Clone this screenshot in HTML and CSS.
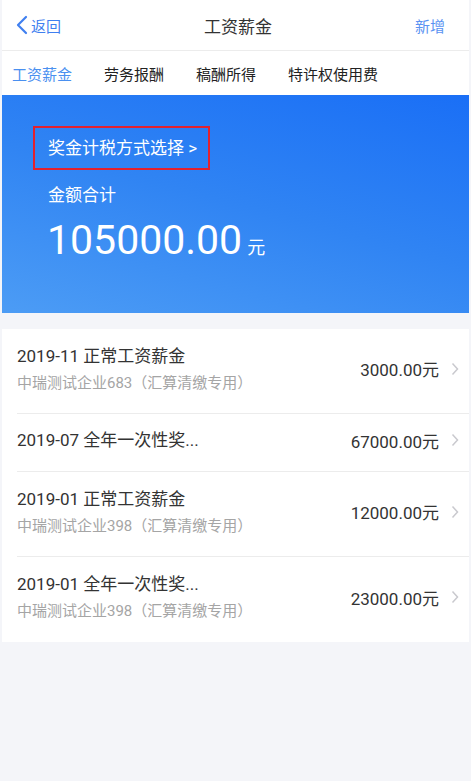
FILE: index.html
```html
<!DOCTYPE html>
<html>
<head>
    <meta charset="utf-8">
    <title>工资薪金</title>
    <link rel="stylesheet" href="styles.css">
</head>
<body>
    <div class="page">
        <header class="topbar">
            <a class="back" href="#">
                <svg width="14" height="20" viewBox="0 0 14 20"><polyline points="11,2 3,10 11,18" fill="none" stroke="#3f7ff0" stroke-width="2.2" stroke-linecap="round" stroke-linejoin="round"/></svg>
                <span>返回</span>
            </a>
            <h1 class="title">工资薪金</h1>
            <a class="add" href="#">新增</a>
        </header>

        <nav class="tabs">
            <a class="tab active" href="#">工资薪金</a>
            <a class="tab" href="#">劳务报酬</a>
            <a class="tab" href="#">稿酬所得</a>
            <a class="tab" href="#">特许权使用费</a>
        </nav>

        <section class="banner">
            <a class="choose" href="#">奖金计税方式选择 &gt;</a>
            <div class="sum-label">金额合计</div>
            <div class="sum"><span class="sum-num">105000.00</span><span class="sum-unit">元</span></div>
        </section>

        <ul class="list">
            <li class="row">
                <div class="info">
                    <div class="name">2019-11 正常工资薪金</div>
                    <div class="corp">中瑞测试企业683（汇算清缴专用）</div>
                </div>
                <div class="money">3000.00元</div>
                <svg class="arrow" width="8" height="14" viewBox="0 0 8 14"><polyline points="1.5,1.5 6.5,7 1.5,12.5" fill="none" stroke="#c9c9ce" stroke-width="1.5"/></svg>
            </li>
            <li class="row single">
                <div class="info">
                    <div class="name">2019-07 全年一次性奖...</div>
                </div>
                <div class="money">67000.00元</div>
                <svg class="arrow" width="8" height="14" viewBox="0 0 8 14"><polyline points="1.5,1.5 6.5,7 1.5,12.5" fill="none" stroke="#c9c9ce" stroke-width="1.5"/></svg>
            </li>
            <li class="row">
                <div class="info">
                    <div class="name">2019-01 正常工资薪金</div>
                    <div class="corp">中瑞测试企业398（汇算清缴专用）</div>
                </div>
                <div class="money">12000.00元</div>
                <svg class="arrow" width="8" height="14" viewBox="0 0 8 14"><polyline points="1.5,1.5 6.5,7 1.5,12.5" fill="none" stroke="#c9c9ce" stroke-width="1.5"/></svg>
            </li>
            <li class="row">
                <div class="info">
                    <div class="name">2019-01 全年一次性奖...</div>
                    <div class="corp">中瑞测试企业398（汇算清缴专用）</div>
                </div>
                <div class="money">23000.00元</div>
                <svg class="arrow" width="8" height="14" viewBox="0 0 8 14"><polyline points="1.5,1.5 6.5,7 1.5,12.5" fill="none" stroke="#c9c9ce" stroke-width="1.5"/></svg>
            </li>
        </ul>
    </div>
</body>
</html>
```

FILE: styles.css
```css
body {
    margin: 0;
    background-color: #f4f5f9;
    font-family: Roboto, "Noto Sans CJK SC", sans-serif;
    color: #333;
}
a {
    text-decoration: none;
}
.page {
    margin: 0 2px;
}
.topbar {
    height: 50px;
    background-color: #fff;
    border-bottom: 1px solid #ececec;
    display: grid;
    grid-template-columns: 1fr auto 1fr;
    align-items: center;
    padding: 0 24px 0 13px;
}
.back {
    display: flex;
    align-items: center;
    gap: 2px;
    color: #3f7ff0;
    font-size: 15px;
}
.title {
    margin: 0 0 0 16px;
    font-size: 17px;
    font-weight: normal;
    color: #333;
}
.add {
    justify-self: end;
    color: #5b93f2;
    font-size: 15px;
}
.tabs {
    height: 44px;
    background-color: #fff;
    display: flex;
    align-items: center;
    gap: 32px;
    padding-left: 10px;
}
.tab {
    font-size: 15px;
    color: #222;
}
.tab.active {
    color: #4a90f0;
}
.banner {
    height: 218px;
    box-sizing: border-box;
    padding: 31px 31px 0;
    background: linear-gradient(15deg, #4c9cf5 0%, #3084f3 50%, #1a6ff6 100%);
    color: #fff;
}
.choose {
    display: inline-block;
    border: 2px solid #e3212e;
    padding: 0 11px 0 13px;
    height: 44px;
    line-height: 40px;
    box-sizing: border-box;
    color: #fff;
    font-size: 17px;
}
.sum-label {
    margin-top: 14px;
    padding-left: 15px;
    font-size: 17px;
    line-height: 22px;
}
.sum {
    padding-left: 14px;
    margin-top: 10px;
    display: flex;
    align-items: baseline;
    gap: 5px;
}
.sum-num {
    font-size: 41px;
    line-height: 48px;
}
.sum-unit {
    font-size: 18px;
}
.list {
    list-style: none;
    margin: 16px 0 0;
    padding: 0 0 0 15px;
    background-color: #fff;
}
.row {
    height: 85px;
    box-sizing: border-box;
    padding: 0 10px 5px 0;
    display: flex;
    align-items: center;
    border-bottom: 1px solid #ececec;
}
.row:last-child {
    border-bottom: none;
}
.row.single {
    height: 58px;
}
.info {
    flex: 1;
}
.name {
    font-size: 17px;
    line-height: 22px;
    color: #333;
}
.corp {
    margin-top: 6px;
    font-size: 15px;
    line-height: 20px;
    color: #a5a5a5;
}
.money {
    font-size: 17px;
    color: #333;
    margin-right: 12px;
}
.arrow {
    display: block;
}
```
